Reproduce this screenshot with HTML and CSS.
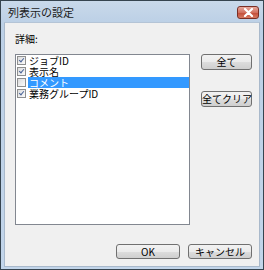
FILE: index.html
```html
<!DOCTYPE html>
<html lang="ja">
  <head>
    <meta charset="UTF-8" />
    <title>列表示の設定</title>
    <link rel="stylesheet" href="styles.css">
  </head>
  <body>
    <div class="window">
      <div class="titlebar">
        <span class="title">列表示の設定</span>
        <div class="close">
          <svg width="11" height="9" viewBox="0 0 11 9">
            <path d="M2 1 L9 8 M9 1 L2 8" stroke="#fff" stroke-width="2.2" stroke-linecap="round"/>
          </svg>
        </div>
      </div>
      <div class="client">
        <div class="label">詳細:</div>
        <div class="main">
          <div class="list">
            <div class="item">
              <span class="check on"></span><span class="text">ジョブID</span>
            </div>
            <div class="item">
              <span class="check on"></span><span class="text">表示名</span>
            </div>
            <div class="item">
              <span class="check"></span><span class="text selected">コメント</span>
            </div>
            <div class="item">
              <span class="check on"></span><span class="text">業務グループID</span>
            </div>
          </div>
          <div class="side">
            <button class="btn">全て</button>
            <button class="btn">全てクリア</button>
          </div>
        </div>
        <div class="footer">
          <button class="btn wide">OK</button>
          <button class="btn wide">キャンセル</button>
        </div>
      </div>
    </div>
  </body>
</html>
```

FILE: styles.css
```css
body {
  margin: 0;
  font-family: "Noto Sans CJK JP", "Liberation Sans", sans-serif;
  font-size: 10px;
  background: #dce6f0;
}

.window {
  width: 264px;
  height: 270px;
  box-sizing: border-box;
  border: 1px solid #36444f;
  background: linear-gradient(#c9d9ea, #bcd0e6 22px, #c2d5ea);
  padding: 0 3px 2px;
  display: flex;
  flex-direction: column;
}

.titlebar {
  height: 21px;
  display: flex;
  align-items: center;
  justify-content: space-between;
  padding-left: 4px;
}

.title {
  font-size: 11px;
  color: #1a1a1a;
}

.close {
  width: 22px;
  height: 13px;
  margin-top: 1px;
  margin-right: 1px;
  box-sizing: border-box;
  border: 1px solid #7a2f25;
  border-radius: 3px;
  background: linear-gradient(#e8a99c, #d1705f 50%, #c24a36 51%, #d67a62);
  display: flex;
  align-items: center;
  justify-content: center;
}

.client {
  flex: 1;
  background: #f0f0f0;
  border: 1px solid #a9b9cb;
  border-top-color: #b4c4d6;
  padding: 9px 7px 0 10px;
  display: flex;
  flex-direction: column;
}

.label {
  height: 13px;
  line-height: 13px;
}

.main {
  display: flex;
  gap: 11px;
  margin-top: 9px;
}

.list {
  width: 175px;
  height: 171px;
  box-sizing: border-box;
  border: 1px solid #828790;
  background: #fff;
}

.item {
  height: 11px;
  display: flex;
  align-items: center;
}

.check {
  width: 9px;
  height: 9px;
  box-sizing: border-box;
  margin-left: 1px;
  margin-right: 2px;
  border: 1px solid #8e8f8f;
  background: linear-gradient(135deg, #dcdcdc, #fbfbfb);
  position: relative;
}

.check.on::after {
  content: "";
  position: absolute;
  left: 2px;
  top: 0;
  width: 2px;
  height: 4px;
  border: solid #4a6498;
  border-width: 0 1.5px 1.5px 0;
  transform: rotate(40deg);
}

.text {
  flex: 1;
  height: 11px;
  line-height: 11px;
  padding-left: 1px;
  white-space: nowrap;
  color: #000;
}

.text.selected {
  background: #3399ff;
  color: #fff;
}

.side {
  display: flex;
  flex-direction: column;
  gap: 21px;
}

.btn {
  width: 51px;
  height: 16px;
  padding: 0;
  font-family: inherit;
  font-size: 10px;
  line-height: 12px;
  white-space: nowrap;
  color: #000;
  border: 1px solid #707070;
  border-radius: 3px;
  background: linear-gradient(#f2f2f2, #ebebeb 50%, #dddddd 51%, #cfcfcf);
}

.footer {
  display: flex;
  justify-content: flex-end;
  gap: 8px;
  margin-top: 19px;
}

.btn.wide {
  width: 64px;
  height: 15px;
}
```
